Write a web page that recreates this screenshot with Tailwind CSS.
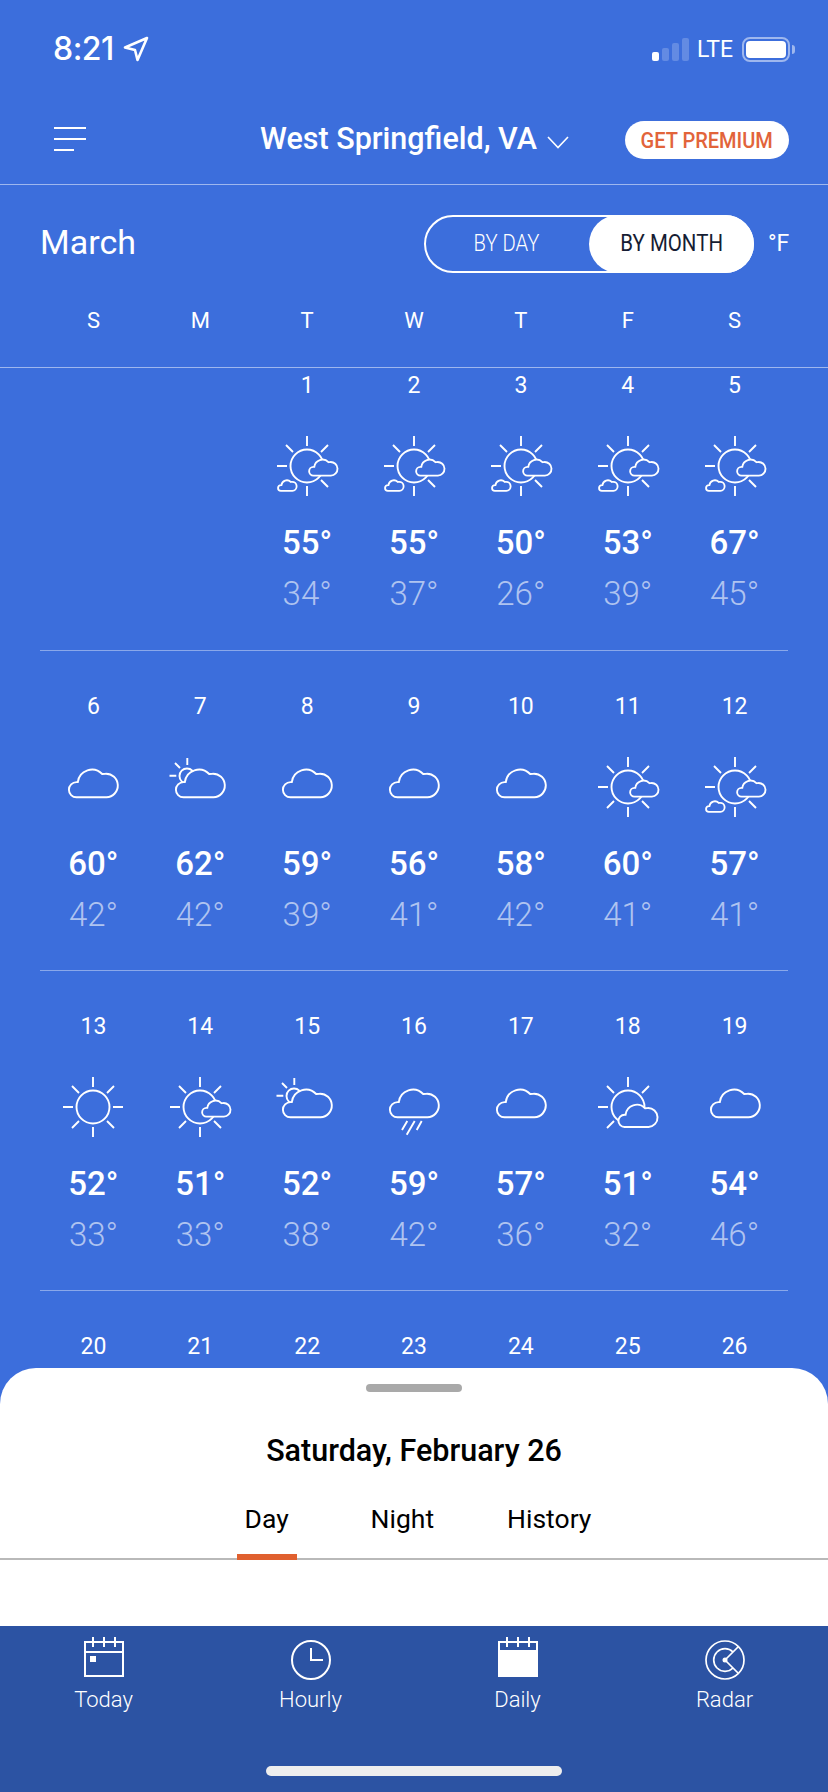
<!DOCTYPE html>
<html lang="en">
<head>
    <meta charset="UTF-8">
    <meta name="viewport" content="width=device-width, initial-scale=1.0">
    <title>Monthly Forecast</title>
    <script src="https://cdn.jsdelivr.net/npm/@tailwindcss/browser@4"></script>
</head>
<body class="bg-[#3c6edc]">
    <svg class="hidden">
        <defs>
            <path id="cloud-path" d="M-16.5 10.3A7.6 7.6 0 0 1-16.5-4.9H-15.2A14.2 14.2 0 0 1 9.2-13Q11-13.3 12.5-13.3A11.8 11.8 0 0 1 13.5 10.3Z"/>
            <g id="rays-left">
                <path d="M0-30V-20M0 30V20M-30 0H-20M-21-21L-14-14M21-21L14-14"/>
            </g>
            <symbol id="sun" viewBox="-32 -32 64 64" overflow="visible">
                <g fill="none" stroke="#fff" stroke-width="1.9">
                    <circle r="16.5"/>
                    <use href="#rays-left"/>
                    <path d="M30 0H20M-21 21L-14 14M21 21L14 14"/>
                </g>
            </symbol>
            <symbol id="sun-cloud" viewBox="-32 -32 64 64" overflow="visible">
                <g fill="none" stroke="#fff" stroke-width="1.9">
                    <circle r="16.5"/>
                    <use href="#rays-left"/>
                    <path d="M-21 21L-14 14M21 21L14 14"/>
                    <use href="#cloud-path" fill="#3c6edc" transform="translate(16.1 3.7) scale(.58)" stroke-width="3.2"/>
                </g>
            </symbol>
            <symbol id="sun-clouds" viewBox="-32 -32 64 64" overflow="visible">
                <g fill="none" stroke="#fff" stroke-width="1.9">
                    <circle r="16.5"/>
                    <use href="#rays-left"/>
                    <path d="M21 21L14 14"/>
                    <use href="#cloud-path" fill="#3c6edc" transform="translate(16.1 3.7) scale(.58)" stroke-width="3.2"/>
                    <use href="#cloud-path" fill="#3c6edc" transform="translate(-19.8 20.9) scale(.38)" stroke-width="4.8"/>
                </g>
            </symbol>
            <symbol id="partly" viewBox="-32 -32 64 64" overflow="visible">
                <g fill="none" stroke="#fff" stroke-width="1.9">
                    <circle r="16.5"/>
                    <path d="M0-30V-20M-30 0H-20M-21-21L-14-14M21-21L14-14M-21 21L-14 14"/>
                    <use href="#cloud-path" fill="#3c6edc" transform="translate(9.7 11.7) scale(.8)" stroke-width="2.4"/>
                </g>
            </symbol>
            <symbol id="cloud" viewBox="-32 -32 64 64" overflow="visible">
                <use href="#cloud-path" fill="none" stroke="#fff" stroke-width="1.9"/>
            </symbol>
            <symbol id="mostly" viewBox="-32 -32 64 64" overflow="visible">
                <g fill="none" stroke="#fff" stroke-width="1.9">
                    <circle cx="-13" cy="-11" r="7.5"/>
                    <path d="M-12.7-29V-22M-25-24L-20-19M-30.5-11.3H-23.7"/>
                    <use href="#cloud-path" fill="#3c6edc"/>
                </g>
            </symbol>
            <symbol id="rain" viewBox="-32 -32 64 64" overflow="visible">
                <g fill="none" stroke="#fff" stroke-width="1.9">
                    <use href="#cloud-path"/>
                    <path d="M-12 23L-6.7 14M-7.3 27.7L.7 14M2.7 23L7.7 14"/>
                </g>
            </symbol>
        </defs>
    </svg>

    <div class="relative h-[1792px] w-[828px] overflow-hidden font-['Roboto',sans-serif] text-white">
        <!-- Status bar -->
        <div class="flex h-[100px] items-center pb-[2px] pl-[53px] pr-[33px]">
            <span class="text-[32px] font-medium font-['Inter',sans-serif] tracking-[-0.5px] leading-none">8:21</span>
            <svg class="ml-[9px]" width="26" height="26" viewBox="0 0 26 26" fill="none" stroke="#fff" stroke-width="2.6" stroke-linejoin="round">
                <path d="M24 2L2 11.5L12 14L14.5 24Z"/>
            </svg>
            <div class="ml-auto flex h-[23px] items-end gap-[3px]">
                <div class="h-[9px] w-[7px] rounded-[2px] bg-white"></div>
                <div class="h-[13px] w-[7px] rounded-[2px] bg-white/20"></div>
                <div class="h-[18px] w-[7px] rounded-[2px] bg-white/20"></div>
                <div class="h-[23px] w-[7px] rounded-[2px] bg-white/20"></div>
            </div>
            <span class="ml-[8px] text-[23px] leading-none">LTE</span>
            <div class="ml-[9px] flex h-[25px] w-[48px] items-center rounded-[8px] border-2 border-white/50 px-[2px]">
                <div class="h-[17px] w-full rounded-[4px] bg-white"></div>
            </div>
            <div class="ml-[2px] h-[9px] w-[3px] rounded-r-[3px] bg-white/50"></div>
        </div>

        <!-- Nav -->
        <div class="flex h-[85px] items-start border-b border-white/50 pl-[54px] pt-[21px]">
            <div class="mt-[6px] flex w-[32px] flex-col gap-[9px]">
                <div class="h-[2px] w-[32px] bg-white"></div>
                <div class="h-[2px] w-[32px] bg-white"></div>
                <div class="h-[2px] w-[20px] bg-white"></div>
            </div>
            <span class="ml-[174px] text-[30.5px] font-medium leading-[36px] whitespace-nowrap">West Springfield, VA</span>
            <svg class="ml-[10px] mt-[15px]" width="22" height="13" viewBox="0 0 22 13" fill="none" stroke="#fff" stroke-width="1.6">
                <path d="M1 1L11 11.5L21 1"/>
            </svg>
            <div class="ml-[56px] flex h-[38px] w-[164px] items-center justify-center rounded-full bg-white text-[#e2643a]">
                <span class="scale-x-[.91] text-[22px] font-medium whitespace-nowrap">GET PREMIUM</span>
            </div>
        </div>

        <!-- Month and toggle -->
        <div class="flex items-start pl-[40px] pt-[30px]">
            <span class="w-[94px] text-[34px] leading-[54px]">March</span>
            <div class="relative ml-[290px] flex h-[58px] w-[330px] items-center rounded-full border-2 border-white">
                <span class="w-[161px] scale-x-[.88] text-center text-[23px] font-light">BY DAY</span>
                <div class="absolute -right-[2px] -top-[2px] flex h-[58px] w-[165px] items-center justify-center rounded-full bg-white text-[#161d33]">
                    <span class="scale-x-[.89] text-[23px] whitespace-nowrap">BY MONTH</span>
                </div>
            </div>
            <span class="ml-[14px] text-[23px] leading-[58px]">°F</span>
        </div>

        <!-- Weekdays -->
        <div class="mt-[32px] grid h-[63px] grid-cols-7 border-b border-white/50 px-[40px] text-center text-[22px] leading-[32px]">
            <div>S</div><div>M</div><div>T</div><div>W</div><div>T</div><div>F</div><div>S</div>
        </div>

        <!-- Week 1 -->
        <div class="mx-[40px] grid grid-cols-7 border-b border-white/40 pb-[36px] text-center">
            <div></div>
            <div></div>
            <div class="flex flex-col items-center"><div class="text-[23px] leading-[36px]">1</div><svg class="mt-[30px]" width="64" height="64"><use href="#sun-clouds"/></svg><div class="mt-[25px] text-[33px] font-medium leading-[40px]">55°</div><div class="mt-[11px] text-[33px] font-light leading-[40px] text-white/60">34°</div></div>
            <div class="flex flex-col items-center"><div class="text-[23px] leading-[36px]">2</div><svg class="mt-[30px]" width="64" height="64"><use href="#sun-clouds"/></svg><div class="mt-[25px] text-[33px] font-medium leading-[40px]">55°</div><div class="mt-[11px] text-[33px] font-light leading-[40px] text-white/60">37°</div></div>
            <div class="flex flex-col items-center"><div class="text-[23px] leading-[36px]">3</div><svg class="mt-[30px]" width="64" height="64"><use href="#sun-clouds"/></svg><div class="mt-[25px] text-[33px] font-medium leading-[40px]">50°</div><div class="mt-[11px] text-[33px] font-light leading-[40px] text-white/60">26°</div></div>
            <div class="flex flex-col items-center"><div class="text-[23px] leading-[36px]">4</div><svg class="mt-[30px]" width="64" height="64"><use href="#sun-clouds"/></svg><div class="mt-[25px] text-[33px] font-medium leading-[40px]">53°</div><div class="mt-[11px] text-[33px] font-light leading-[40px] text-white/60">39°</div></div>
            <div class="flex flex-col items-center"><div class="text-[23px] leading-[36px]">5</div><svg class="mt-[30px]" width="64" height="64"><use href="#sun-clouds"/></svg><div class="mt-[25px] text-[33px] font-medium leading-[40px]">67°</div><div class="mt-[11px] text-[33px] font-light leading-[40px] text-white/60">45°</div></div>
        </div>

        <!-- Week 2 -->
        <div class="mx-[40px] grid grid-cols-7 border-b border-white/40 pb-[35px] pt-[38px] text-center">
            <div class="flex flex-col items-center"><div class="text-[23px] leading-[36px]">6</div><svg class="mt-[30px]" width="64" height="64"><use href="#cloud"/></svg><div class="mt-[25px] text-[33px] font-medium leading-[40px]">60°</div><div class="mt-[11px] text-[33px] font-light leading-[40px] text-white/60">42°</div></div>
            <div class="flex flex-col items-center"><div class="text-[23px] leading-[36px]">7</div><svg class="mt-[30px]" width="64" height="64"><use href="#mostly"/></svg><div class="mt-[25px] text-[33px] font-medium leading-[40px]">62°</div><div class="mt-[11px] text-[33px] font-light leading-[40px] text-white/60">42°</div></div>
            <div class="flex flex-col items-center"><div class="text-[23px] leading-[36px]">8</div><svg class="mt-[30px]" width="64" height="64"><use href="#cloud"/></svg><div class="mt-[25px] text-[33px] font-medium leading-[40px]">59°</div><div class="mt-[11px] text-[33px] font-light leading-[40px] text-white/60">39°</div></div>
            <div class="flex flex-col items-center"><div class="text-[23px] leading-[36px]">9</div><svg class="mt-[30px]" width="64" height="64"><use href="#cloud"/></svg><div class="mt-[25px] text-[33px] font-medium leading-[40px]">56°</div><div class="mt-[11px] text-[33px] font-light leading-[40px] text-white/60">41°</div></div>
            <div class="flex flex-col items-center"><div class="text-[23px] leading-[36px]">10</div><svg class="mt-[30px]" width="64" height="64"><use href="#cloud"/></svg><div class="mt-[25px] text-[33px] font-medium leading-[40px]">58°</div><div class="mt-[11px] text-[33px] font-light leading-[40px] text-white/60">42°</div></div>
            <div class="flex flex-col items-center"><div class="text-[23px] leading-[36px]">11</div><svg class="mt-[30px]" width="64" height="64"><use href="#sun-cloud"/></svg><div class="mt-[25px] text-[33px] font-medium leading-[40px]">60°</div><div class="mt-[11px] text-[33px] font-light leading-[40px] text-white/60">41°</div></div>
            <div class="flex flex-col items-center"><div class="text-[23px] leading-[36px]">12</div><svg class="mt-[30px]" width="64" height="64"><use href="#sun-clouds"/></svg><div class="mt-[25px] text-[33px] font-medium leading-[40px]">57°</div><div class="mt-[11px] text-[33px] font-light leading-[40px] text-white/60">41°</div></div>
        </div>

        <!-- Week 3 -->
        <div class="mx-[40px] grid grid-cols-7 border-b border-white/40 pb-[35px] pt-[38px] text-center">
            <div class="flex flex-col items-center"><div class="text-[23px] leading-[36px]">13</div><svg class="mt-[30px]" width="64" height="64"><use href="#sun"/></svg><div class="mt-[25px] text-[33px] font-medium leading-[40px]">52°</div><div class="mt-[11px] text-[33px] font-light leading-[40px] text-white/60">33°</div></div>
            <div class="flex flex-col items-center"><div class="text-[23px] leading-[36px]">14</div><svg class="mt-[30px]" width="64" height="64"><use href="#sun-cloud"/></svg><div class="mt-[25px] text-[33px] font-medium leading-[40px]">51°</div><div class="mt-[11px] text-[33px] font-light leading-[40px] text-white/60">33°</div></div>
            <div class="flex flex-col items-center"><div class="text-[23px] leading-[36px]">15</div><svg class="mt-[30px]" width="64" height="64"><use href="#mostly"/></svg><div class="mt-[25px] text-[33px] font-medium leading-[40px]">52°</div><div class="mt-[11px] text-[33px] font-light leading-[40px] text-white/60">38°</div></div>
            <div class="flex flex-col items-center"><div class="text-[23px] leading-[36px]">16</div><svg class="mt-[30px]" width="64" height="64"><use href="#rain"/></svg><div class="mt-[25px] text-[33px] font-medium leading-[40px]">59°</div><div class="mt-[11px] text-[33px] font-light leading-[40px] text-white/60">42°</div></div>
            <div class="flex flex-col items-center"><div class="text-[23px] leading-[36px]">17</div><svg class="mt-[30px]" width="64" height="64"><use href="#cloud"/></svg><div class="mt-[25px] text-[33px] font-medium leading-[40px]">57°</div><div class="mt-[11px] text-[33px] font-light leading-[40px] text-white/60">36°</div></div>
            <div class="flex flex-col items-center"><div class="text-[23px] leading-[36px]">18</div><svg class="mt-[30px]" width="64" height="64"><use href="#partly"/></svg><div class="mt-[25px] text-[33px] font-medium leading-[40px]">51°</div><div class="mt-[11px] text-[33px] font-light leading-[40px] text-white/60">32°</div></div>
            <div class="flex flex-col items-center"><div class="text-[23px] leading-[36px]">19</div><svg class="mt-[30px]" width="64" height="64"><use href="#cloud"/></svg><div class="mt-[25px] text-[33px] font-medium leading-[40px]">54°</div><div class="mt-[11px] text-[33px] font-light leading-[40px] text-white/60">46°</div></div>
        </div>

        <!-- Week 4, cut off by the sheet -->
        <div class="mx-[40px] grid grid-cols-7 pt-[38px] text-center text-[23px] leading-[36px]">
            <div>20</div><div>21</div><div>22</div><div>23</div><div>24</div><div>25</div><div>26</div>
        </div>

        <!-- Bottom sheet and tab bar -->
        <div class="absolute inset-x-0 bottom-0 flex flex-col">
            <div class="flex h-[258px] flex-col items-center rounded-t-[36px] bg-white text-black">
                <div class="mt-[16px] h-[8px] w-[96px] rounded-full bg-[#a9a9a9]"></div>
                <div class="mt-[39px] text-[30.5px] font-medium leading-[40px]">Saturday, February 26</div>
                <div class="mt-[30px] flex h-[59px] w-full items-start justify-center border-b-2 border-[#b9b9b9] text-[26.5px] leading-[36px]">
                    <div class="relative flex h-[57px] w-[60px] justify-center">
                        Day
                        <div class="absolute bottom-[-2px] left-0 h-[6px] w-[60px] bg-[#e0602f]"></div>
                    </div>
                    <div class="ml-[74px] mr-[73px]">Night</div>
                    <div>History</div>
                </div>
            </div>
            <div class="relative grid h-[166px] grid-cols-4 bg-[#2c53a3] text-[22px] font-light leading-[30px]">
                <div class="flex flex-col items-center pt-[10px]">
                    <svg width="42" height="44" viewBox="0 0 42 44" fill="none" stroke="#fff" stroke-width="2">
                        <rect x="2" y="6" width="38" height="34"/>
                        <path d="M2 16H40M10 1V11M21 1V11M32 1V11"/>
                        <rect x="7" y="20" width="6" height="6" fill="#fff" stroke="none"/>
                    </svg>
                    <span class="mt-[5px]">Today</span>
                </div>
                <div class="flex flex-col items-center pt-[10px]">
                    <svg width="42" height="44" viewBox="0 0 42 44" fill="none" stroke="#fff" stroke-width="2">
                        <circle cx="21" cy="24" r="19"/>
                        <path d="M21 12V24H33"/>
                    </svg>
                    <span class="mt-[5px]">Hourly</span>
                </div>
                <div class="flex flex-col items-center pt-[10px]">
                    <svg width="42" height="44" viewBox="0 0 42 44" fill="none" stroke="#fff" stroke-width="2">
                        <rect x="1" y="5" width="40" height="36" fill="#fff" stroke="none"/>
                        <rect x="3" y="7" width="36" height="7" fill="#2c53a3" stroke="none"/>
                        <path d="M10 1V11M21 1V11M32 1V11"/>
                    </svg>
                    <span class="mt-[5px]">Daily</span>
                </div>
                <div class="flex flex-col items-center pt-[10px]">
                    <svg width="42" height="44" viewBox="-21 -24 42 44" fill="none" stroke="#fff" stroke-width="1.7">
                        <circle r="19"/>
                        <path d="M8-8A11.3 11.3 0 1 0 8 8"/>
                        <path d="M0 0L13.5-13.5M0 0L13 13"/>
                        <circle r="2.5" fill="#fff" stroke="none"/>
                    </svg>
                    <span class="mt-[5px]">Radar</span>
                </div>
                <div class="absolute bottom-[16px] left-[266px] h-[10px] w-[296px] rounded-full bg-[#eeeeee]"></div>
            </div>
        </div>
    </div>
</body>
</html>
